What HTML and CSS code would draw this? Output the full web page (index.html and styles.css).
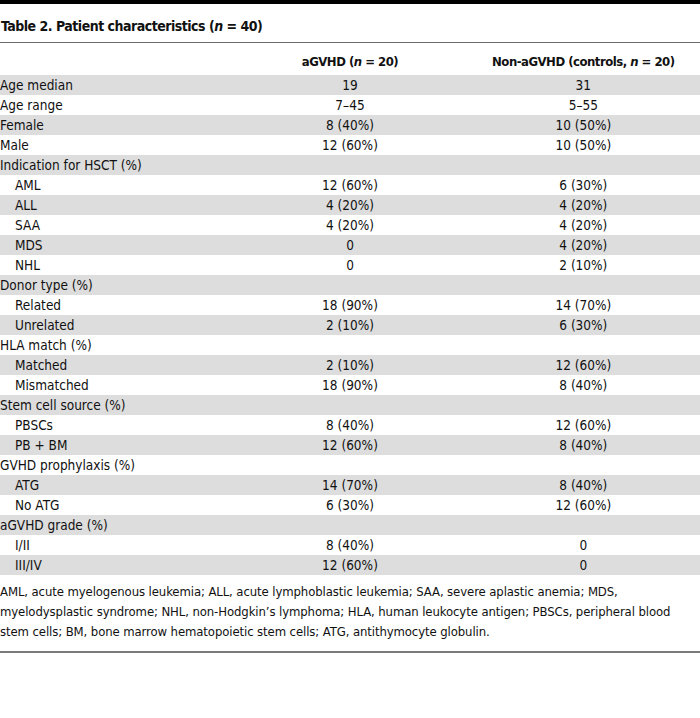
FILE: index.html
```html
<!DOCTYPE html>
<html>
<head>
<meta charset="utf-8">
<link rel="stylesheet" href="styles.css">
</head>
<body>
<div class="page">
  <div class="topbar"></div>
  <h1 class="title">Table 2. Patient characteristics (<i>n</i> = 40)</h1>
  <table class="data">
    <colgroup><col class="c1"><col class="c2"><col class="c3"></colgroup>
    <thead>
      <tr><th></th><th>aGVHD (<i>n</i> = 20)</th><th>Non-aGVHD (controls, <i>n</i> = 20)</th></tr>
    </thead>
    <tbody>
      <tr><td>Age median</td><td>19</td><td>31</td></tr>
      <tr><td>Age range</td><td>7–45</td><td>5–55</td></tr>
      <tr><td>Female</td><td>8 (40%)</td><td>10 (50%)</td></tr>
      <tr><td>Male</td><td>12 (60%)</td><td>10 (50%)</td></tr>
      <tr><td>Indication for HSCT (%)</td><td></td><td></td></tr>
      <tr><td class="sub">AML</td><td>12 (60%)</td><td>6 (30%)</td></tr>
      <tr><td class="sub">ALL</td><td>4 (20%)</td><td>4 (20%)</td></tr>
      <tr><td class="sub">SAA</td><td>4 (20%)</td><td>4 (20%)</td></tr>
      <tr><td class="sub">MDS</td><td>0</td><td>4 (20%)</td></tr>
      <tr><td class="sub">NHL</td><td>0</td><td>2 (10%)</td></tr>
      <tr><td>Donor type (%)</td><td></td><td></td></tr>
      <tr><td class="sub">Related</td><td>18 (90%)</td><td>14 (70%)</td></tr>
      <tr><td class="sub">Unrelated</td><td>2 (10%)</td><td>6 (30%)</td></tr>
      <tr><td>HLA match (%)</td><td></td><td></td></tr>
      <tr><td class="sub">Matched</td><td>2 (10%)</td><td>12 (60%)</td></tr>
      <tr><td class="sub">Mismatched</td><td>18 (90%)</td><td>8 (40%)</td></tr>
      <tr><td>Stem cell source (%)</td><td></td><td></td></tr>
      <tr><td class="sub">PBSCs</td><td>8 (40%)</td><td>12 (60%)</td></tr>
      <tr><td class="sub">PB + BM</td><td>12 (60%)</td><td>8 (40%)</td></tr>
      <tr><td>GVHD prophylaxis (%)</td><td></td><td></td></tr>
      <tr><td class="sub">ATG</td><td>14 (70%)</td><td>8 (40%)</td></tr>
      <tr><td class="sub">No ATG</td><td>6 (30%)</td><td>12 (60%)</td></tr>
      <tr><td>aGVHD grade (%)</td><td></td><td></td></tr>
      <tr><td class="sub">I/II</td><td>8 (40%)</td><td>0</td></tr>
      <tr><td class="sub">III/IV</td><td>12 (60%)</td><td>0</td></tr>
    </tbody>
  </table>
  <p class="foot">AML, acute myelogenous leukemia; ALL, acute lymphoblastic leukemia; SAA, severe aplastic anemia; MDS, myelodysplastic syndrome; NHL, non-Hodgkin’s lymphoma; HLA, human leukocyte antigen; PBSCs, peripheral blood stem cells; BM, bone marrow hematopoietic stem cells; ATG, antithymocyte globulin.</p>
  <div class="bottomrule"></div>
</div>
</body>
</html>
```

FILE: styles.css
```css
html, body {
  margin: 0;
  padding: 0;
  background: #fff;
}
.page {
  width: 700px;
  font-family: "DejaVu Sans Condensed", "DejaVu Sans", sans-serif;
  font-stretch: condensed;
  color: #111;
  font-size: 13.5px;
}
.topbar {
  height: 4px;
  background: #000;
}
.title {
  margin: 0;
  padding: 12px 0 0 1px;
  height: 26px;
  font-size: 14px;
  letter-spacing: -0.5px;
  font-weight: bold;
  line-height: 20px;
  border-bottom: 1px solid #6b6b6b;
}
.data {
  width: 100%;
  border-collapse: collapse;
  table-layout: fixed;
}
.c1, .c2, .c3 { width: 33.333%; }
.data th {
  height: 29px;
  padding: 0 0 3px;
  font-size: 13px;
  letter-spacing: -0.5px;
  font-weight: bold;
  text-align: center;
  vertical-align: bottom;
  line-height: 20px;
}
.data td {
  height: 20px;
  padding: 0;
  line-height: 20px;
  text-align: center;
  white-space: nowrap;
}
.data td:first-child {
  text-align: left;
}
.data td.sub {
  padding-left: 15px;
}
.data tbody tr:nth-child(odd) {
  background: #dddddd;
}
.foot {
  margin: 0;
  padding: 7px 0 9px 0;
  font-size: 13px;
  letter-spacing: -0.1px;
  line-height: 20px;
}
.bottomrule {
  height: 2px;
  background: #7a7a7a;
}
```
